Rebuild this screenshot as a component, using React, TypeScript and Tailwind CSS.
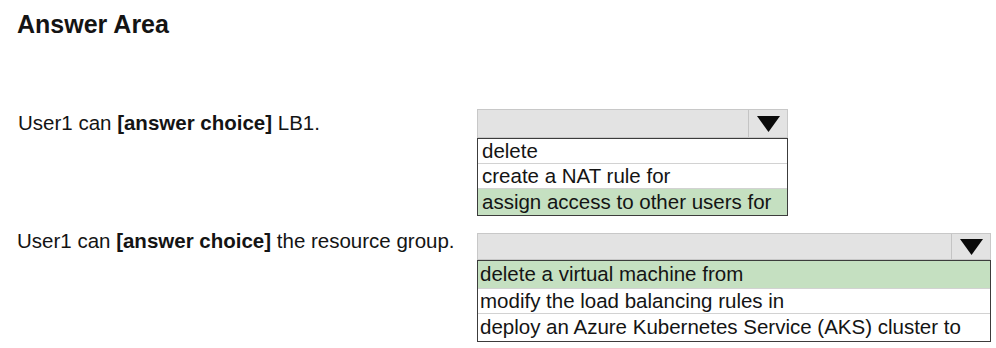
const font = "font-['Liberation_Sans',Arial,sans-serif]";

function Arrow() {
  return (
    <svg width="23" height="16" viewBox="0 0 23 16">
      <polygon points="0,0 23,0 11.5,16" fill="#0a0a0a" />
    </svg>
  );
}

type Option = { text: string; h: string; selected?: boolean };

function Dropdown({
  width,
  headerH,
  options,
  pad,
}: {
  width: string;
  headerH: string;
  options: Option[];
  pad: string;
}) {
  return (
    <div className={`${width} flex flex-col`}>
      <div className={`${headerH} flex bg-[#e3e3e3] border border-[#c8c8c8]`}>
        <div className="flex-1" />
        <div className="w-[39px] border-l border-[#c4c4c4] flex items-center justify-center">
          <Arrow />
        </div>
      </div>
      <div className="border border-[#3c3c3c] bg-white">
        {options.map((o, i) => (
          <div
            key={o.text}
            className={`${o.h} ${pad} flex items-center text-[20.5px] leading-none whitespace-nowrap ${
              o.selected ? "bg-[#c5e0c1]" : ""
            } ${i < options.length - 1 ? "border-b border-[#d2d2d2]" : ""}`}
          >
            {o.text}
          </div>
        ))}
      </div>
    </div>
  );
}

export default function App() {
  return (
    <div className={`w-[996px] h-[348px] bg-white text-[#141414] ${font}`}>
      <h1 className="pl-[17px] pt-[10px] text-[25px] font-bold leading-[28px]">
        Answer Area
      </h1>

      <div className="mt-[71px] flex items-start">
        <div className="w-[477px] pl-[18px] pt-[3px] text-[20.5px] leading-[22px]">
          User1 can <b>[answer choice]</b> LB1.
        </div>
        <Dropdown
          width="w-[311px]"
          headerH="h-[29px]"
          pad="pl-[4px]"
          options={[
            { text: "delete", h: "h-[25px]" },
            { text: "create a NAT rule for", h: "h-[25px]" },
            { text: "assign access to other users for", h: "h-[26px]", selected: true },
          ]}
        />
      </div>

      <div className="mt-[13px] flex items-start">
        <div className="w-[477px] pl-[17px] pt-[1px] text-[20.5px] leading-[22px]">
          User1 can <b>[answer choice]</b> the resource group.
        </div>
        <div className="mt-[4px]">
          <Dropdown
            width="w-[514px]"
            headerH="h-[27px]"
            pad="pl-[2px]"
            options={[
              { text: "delete a virtual machine from", h: "h-[28px]", selected: true },
              { text: "modify the load balancing rules in", h: "h-[25px]" },
              { text: "deploy an Azure Kubernetes Service (AKS) cluster to", h: "h-[27px]" },
            ]}
          />
        </div>
      </div>
    </div>
  );
}
